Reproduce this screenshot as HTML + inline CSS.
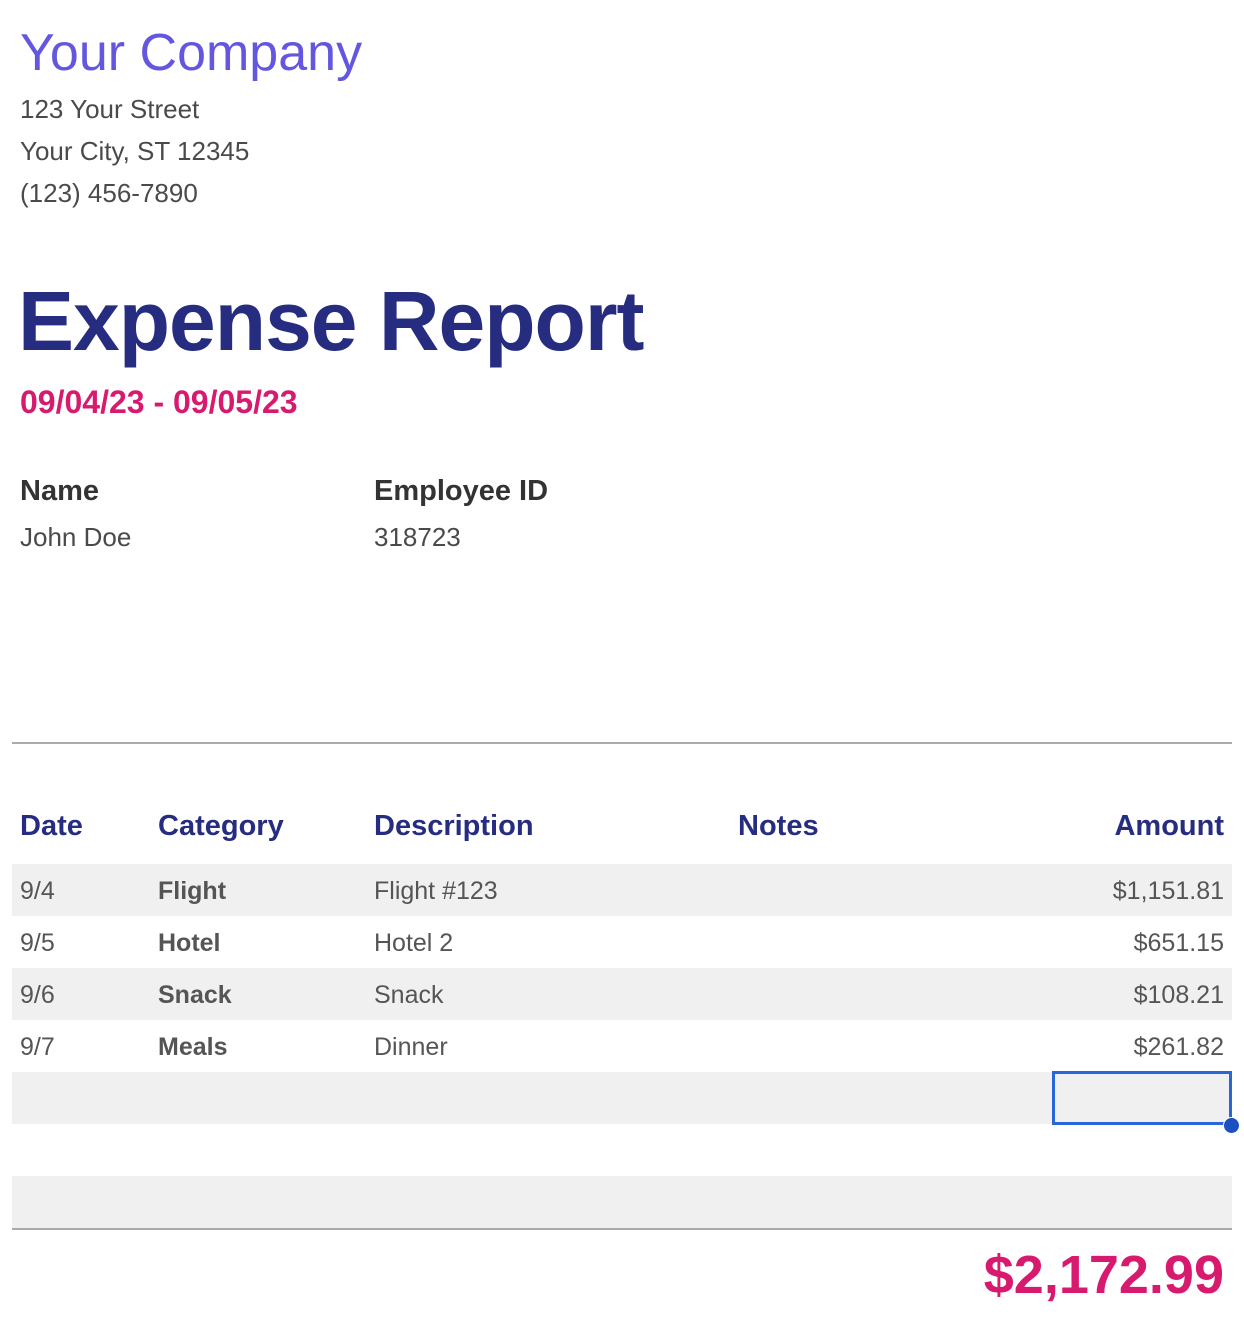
<!DOCTYPE html>
<html><head><meta charset="utf-8"><style>
body{margin:0;width:1244px;height:1324px;background:#fff;font-family:"Liberation Sans",Arial,sans-serif;position:relative;overflow:hidden}
.t{position:absolute;line-height:1;white-space:nowrap}
.a{font-size:26px;color:#4a4a4a}
.h{font-size:29px;font-weight:bold;color:#262c80}
.r{font-size:25px;color:#555}
.b{font-weight:bold}
.row{position:absolute;left:12px;width:1220px;height:52px;background:#f0f0f0}
</style></head><body>
<div class="t" style="left:20px;top:27px;font-size:52px;color:#6457df">Your Company</div>
<div class="t a" style="left:20px;top:96px">123 Your Street</div>
<div class="t a" style="left:20px;top:138px">Your City, ST 12345</div>
<div class="t a" style="left:20px;top:180px">(123) 456-7890</div>
<div class="t" style="left:18px;top:279px;font-size:84px;font-weight:bold;color:#262c80;letter-spacing:-1px">Expense Report</div>
<div class="t" style="left:20px;top:386px;font-size:32px;font-weight:bold;color:#d81a6f">09/04/23 - 09/05/23</div>
<div class="t" style="left:20px;top:477px;font-size:29px;font-weight:bold;color:#333">Name</div>
<div class="t" style="left:374px;top:477px;font-size:29px;font-weight:bold;color:#333">Employee ID</div>
<div class="t a" style="left:20px;top:524px">John Doe</div>
<div class="t a" style="left:374px;top:524px">318723</div>
<div style="position:absolute;left:12px;top:742px;width:1220px;height:2px;background:#aaa"></div>
<div class="t h" style="left:20px;top:812px">Date</div>
<div class="t h" style="left:158px;top:812px">Category</div>
<div class="t h" style="left:374px;top:812px">Description</div>
<div class="t h" style="left:738px;top:812px">Notes</div>
<div class="t h" style="right:20px;top:812px">Amount</div>
<div class="row" style="top:864px"></div>
<div class="row" style="top:968px"></div>
<div class="row" style="top:1072px"></div>
<div class="row" style="top:1176px"></div>
<div class="t r" style="left:20px;top:879px">9/4</div><div class="t r b" style="left:158px;top:879px">Flight</div><div class="t r" style="left:374px;top:879px">Flight #123</div><div class="t r" style="right:20px;top:879px">$1,151.81</div>
<div class="t r" style="left:20px;top:931px">9/5</div><div class="t r b" style="left:158px;top:931px">Hotel</div><div class="t r" style="left:374px;top:931px">Hotel 2</div><div class="t r" style="right:20px;top:931px">$651.15</div>
<div class="t r" style="left:20px;top:983px">9/6</div><div class="t r b" style="left:158px;top:983px">Snack</div><div class="t r" style="left:374px;top:983px">Snack</div><div class="t r" style="right:20px;top:983px">$108.21</div>
<div class="t r" style="left:20px;top:1035px">9/7</div><div class="t r b" style="left:158px;top:1035px">Meals</div><div class="t r" style="left:374px;top:1035px">Dinner</div><div class="t r" style="right:20px;top:1035px">$261.82</div>
<div style="position:absolute;left:1052px;top:1072px;width:174px;height:48px;border:3px solid #2767d9;box-sizing:content-box;margin:-1px 0 0 0"></div>
<div style="position:absolute;left:1223px;top:1117px;width:17px;height:17px;border-radius:50%;background:#1b4fc4;border:1px solid #fff;box-sizing:border-box"></div>
<div style="position:absolute;left:12px;top:1228px;width:1220px;height:2px;background:#aaa"></div>
<div class="t" style="right:20px;top:1248px;font-size:54px;font-weight:bold;color:#d81a6f">$2,172.99</div>
</body></html>
